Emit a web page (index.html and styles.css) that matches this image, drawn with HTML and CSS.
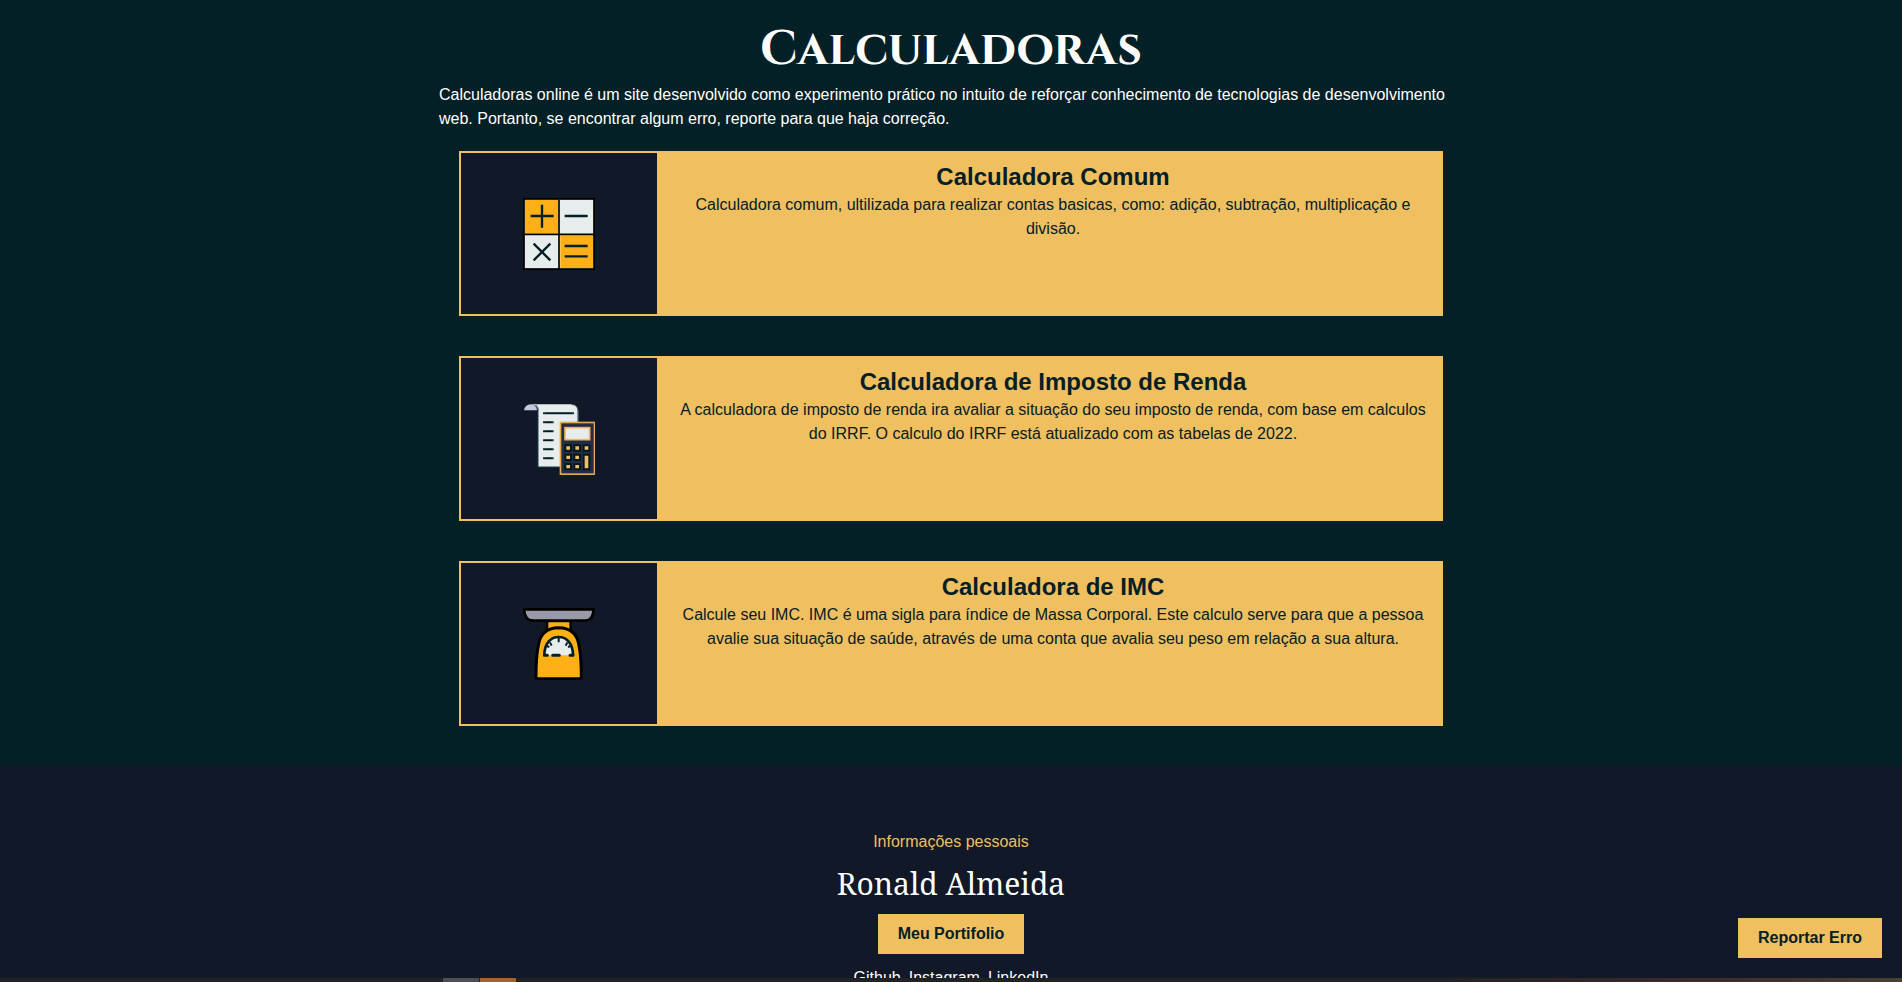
FILE: index.html
```html
<!DOCTYPE html>
<html lang="pt-BR">
<head>
<meta charset="utf-8">
<title>Calculadoras</title>
<link rel="stylesheet" href="styles.css">
</head>
<body>
<div class="page">
  <main class="main">
    <div class="container">
      <h1 class="title">Calculadoras</h1>
      <p class="intro">Calculadoras online é um site desenvolvido como experimento prático no intuito de reforçar conhecimento de tecnologias de desenvolvimento web. Portanto, se encontrar algum erro, reporte para que haja correção.</p>
      <div class="cards">
        <a class="card" href="#comum">
          <div class="card-icon">
            <svg class="icon" viewBox="25 22 216 216" aria-hidden="true">
              <rect x="27.500" y="24.500" width="211" height="211" fill="#e7eced" stroke="#000" stroke-width="6"/>
              <path d="M31 28h99v100H31zM137 134h98v98h-98z" fill="#ffb017"/>
              <path d="M133 27v208M28 131h208" stroke="#000" stroke-width="5"/>
              <path d="M48 76h69M82 42v69M150 76h69M57 159l50 50M107 159l-50 50M150 166h69M150 197h69" stroke="#032026" stroke-width="7" fill="none"/>
            </svg>
          </div>
          <div class="card-body">
            <h2 class="card-title">Calculadora Comum</h2>
            <p class="card-text">Calculadora comum, ultilizada para realizar contas basicas, como: adição, subtração, multiplicação e divisão.</p>
          </div>
        </a>
        <a class="card" href="#imposto">
          <div class="card-icon">
            <svg class="icon" viewBox="42 38 216 216" aria-hidden="true">
              <path d="M70 42H188Q208 43 208 65V230H87V60Q84 44 66 42Z" fill="#e7eced"/>
              <path d="M87 60V230H153M80 44Q88 50 88 60M188 42Q207 44 207 62V95" fill="none" stroke="#1d4146" stroke-width="3"/>
              <path d="M45 60Q48 43 65 42Q82 43 84 60Z" fill="#c3c9df"/>
              <path d="M102 69h93M102 96h32M102 123h32M102 150h32M102 177h32M102 204h32" stroke="#17363b" stroke-width="6"/>
              <path d="M108 69h80M107 96h22M107 123h22M107 150h22M107 177h22M107 204h22" stroke="#03191f" stroke-width="4"/>
              <rect x="154.500" y="96.500" width="102" height="155" fill="#242c45" stroke="#e3a94e" stroke-width="5"/>
              <rect x="168" y="112" width="74" height="36" fill="#e7eced" stroke="#f1b84e" stroke-width="5"/>
              <g fill="#f2bf60" stroke="#03191f" stroke-width="6">
                <path d="M169 165h17v16h-17zM196 165h17v16h-17zM224 165h17v16h-17zM169 193h17v16h-17zM196 193h17v16h-17zM169 221h17v16h-17zM196 221h17v16h-17zM224 193h17v44h-17z"/>
              </g>
            </svg>
          </div>
          <div class="card-body">
            <h2 class="card-title">Calculadora de Imposto de Renda</h2>
            <p class="card-text">A calculadora de imposto de renda ira avaliar a situação do seu imposto de renda, com base em calculos do IRRF. O calculo do IRRF está atualizado com as tabelas de 2022.</p>
          </div>
        </a>
        <a class="card" href="#imc">
          <div class="card-icon">
            <svg class="icon" viewBox="41 37 216 216" aria-hidden="true">
              <path d="M113 76h71v35h-71z" fill="#ffb017" stroke="#000" stroke-width="8"/>
              <path d="M44 41H253Q250 75 228 75H70Q47 75 44 41Z" fill="#989ba7" stroke="#000" stroke-width="8" stroke-linejoin="round"/>
              <path d="M80 244Q80 180 88 145Q96 97 148 96Q200 97 208 145Q216 180 216 244Q216 249 210 249H86Q80 249 80 244Z" fill="#ffb017" stroke="#000" stroke-width="9"/>
              <path d="M105 179C105 145 123 124 148 124S191 145 191 179" fill="#e7eced" stroke="#032026" stroke-width="8"/>
              <path d="M148 126v14M122 140l5 10M174 140l-5 10M112 151l8 3M184 151l-8 3" stroke="#032026" stroke-width="6"/>
              <path d="M105 179h9M182 179h9M130 179h20" stroke="#032026" stroke-width="9" stroke-linecap="round"/>
            </svg>
          </div>
          <div class="card-body">
            <h2 class="card-title">Calculadora de IMC</h2>
            <p class="card-text">Calcule seu IMC. IMC é uma sigla para índice de Massa Corporal. Este calculo serve para que a pessoa avalie sua situação de saúde, através de uma conta que avalia seu peso em relação a sua altura.</p>
          </div>
        </a>
      </div>
    </div>
  </main>
  <footer class="footer">
    <p class="footer-label">Informações pessoais</p>
    <p class="footer-name">Ronald Almeida</p>
    <a class="button" href="#portifolio">Meu Portifolio</a>
    <nav class="links">
      <a href="#github">Github</a>
      <a href="#instagram">Instagram</a>
      <a href="#linkedin">LinkedIn</a>
    </nav>
  </footer>
  <button class="button report" type="button">Reportar Erro</button>
</div>
<div class="strip" aria-hidden="true">
  <span class="strip-item"></span>
  <span class="strip-item strip-item-active"></span>
</div>
</body>
</html>
```
FILE: styles.css
```css
* {
  box-sizing: border-box;
  margin: 0;
  padding: 0;
}

body {
  display: flex;
  flex-direction: column;
  height: 100vh;
  overflow: hidden;
  background: #111827;
  color: #fff;
  font: 16px/24px "Liberation Sans", Arial, sans-serif;
}

a {
  color: inherit;
  text-decoration: none;
}

.page {
  position: relative;
  flex: 1;
  min-height: 0;
  overflow: hidden;
}

.main {
  padding: 20px 0 40px;
  background: #032026;
}

.container {
  max-width: 1024px;
  margin: 0 auto;
}

.title {
  padding-bottom: 3px;
  font: bold 48px/60px "Cinzel", "Liberation Serif", "Times New Roman", serif;
  text-align: center;
}

.cards {
  display: grid;
  gap: 40px;
  padding: 20px 20px 0;
}

.card {
  display: grid;
  grid-template-columns: 1fr 4fr;
  min-height: 165px;
  border: 2px solid #f0bf60;
  background: #f0bf60;
  color: #032026;
}

.card-icon {
  display: flex;
  align-items: center;
  justify-content: center;
  background: #111827;
}

.icon {
  width: 72px;
  height: 72px;
}

.card-body {
  padding: 8px 12px 8px 20px;
  text-align: center;
}

.card-title {
  font-size: 24px;
  line-height: 32px;
}

.footer {
  display: flex;
  flex-direction: column;
  align-items: center;
  padding: 64px 0;
}

.footer-label {
  color: #f0bf60;
}

.footer-name {
  padding: 8px 0;
  font: 30px/44px "Noto Serif", "DejaVu Serif", serif;
}

.button {
  padding: 8px 20px;
  border: 0;
  background: #f0bf60;
  color: #032026;
  font: bold 16px/24px "Liberation Sans", Arial, sans-serif;
}

.report {
  position: absolute;
  right: 20px;
  bottom: 20px;
}

.links {
  display: flex;
  gap: 8px;
  padding-top: 12px;
}

.strip {
  display: flex;
  gap: 1px;
  height: 4px;
  padding-left: 443px;
  background: linear-gradient(90deg, #222 75%, #40292c 90%, #4a4033);
}

.strip-item {
  width: 36px;
  background: #4f4e51;
}

.strip-item-active {
  background: #a86127;
}
```
